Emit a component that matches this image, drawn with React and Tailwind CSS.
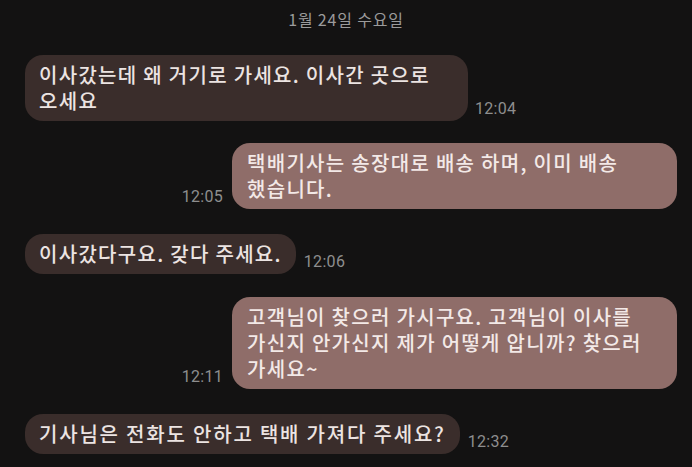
export default function App() {
  const bubbleFont = { fontFamily: '"Noto Sans CJK KR", "Noto Sans", sans-serif' };
  const timeCls = "mb-[3px] text-[16px] leading-[18px] text-[#8e8e8e] tracking-[0.3px]";
  const timeFont = { fontFamily: 'Roboto, sans-serif' };
  return (
    <div className="w-[692px] h-[467px] bg-[#131212] overflow-hidden flex flex-col" style={bubbleFont}>
      <div className="pt-[9px] text-center text-[16px] leading-[20px] tracking-[0.8px] text-[#9b9b9b]">1월 24일 수요일</div>

      {/* 1 */}
      <div className="mt-[26px] pl-[25px] flex items-end gap-[7px]">
        <div className="w-[443px] rounded-[18px] bg-[#3a2d2b] px-[14px] py-[7px] text-[20px] leading-[26px] tracking-[1.3px] font-medium text-[#ece4e2]">
          이사갔는데 왜 거기로 가세요. 이사간 곳으로<br />오세요
        </div>
        <div className={timeCls} style={timeFont}>12:04</div>
      </div>

      {/* 2 */}
      <div className="mt-[22px] pr-[15px] flex items-end justify-end gap-[9px]">
        <div className={timeCls} style={timeFont}>12:05</div>
        <div className="w-[445px] rounded-[18px] bg-[#8f6d69] px-[15px] py-[7px] text-[20px] leading-[26px] tracking-[1.3px] font-medium text-[#f3e9e7]">
          택배기사는 송장대로 배송 하며, 이미 배송<br />했습니다.
        </div>
      </div>

      {/* 3 */}
      <div className="mt-[25px] pl-[25px] flex items-end gap-[8px]">
        <div className="rounded-[18px] bg-[#3a2d2b] px-[14px] py-[7px] text-[20px] leading-[26px] tracking-[1.3px] font-medium text-[#ece4e2]">
          이사갔다구요. 갖다 주세요.
        </div>
        <div className={timeCls} style={timeFont}>12:06</div>
      </div>

      {/* 4 */}
      <div className="mt-[23px] pr-[15px] flex items-end justify-end gap-[9px]">
        <div className={timeCls} style={timeFont}>12:11</div>
        <div className="w-[445px] rounded-[18px] bg-[#8f6d69] px-[15px] py-[7px] text-[20px] leading-[26px] tracking-[1.3px] font-medium text-[#f3e9e7]">
          고객님이 찾으러 가시구요. 고객님이 이사를<br />가신지 안가신지 제가 어떻게 압니까? 찾으러<br />가세요~
        </div>
      </div>

      {/* 5 */}
      <div className="mt-[25px] pl-[25px] flex items-end gap-[8px]">
        <div className="rounded-[18px] bg-[#3a2d2b] px-[14px] py-[7px] text-[20px] leading-[26px] tracking-[1.8px] font-medium text-[#ece4e2]">
          기사님은 전화도 안하고 택배 가져다 주세요?
        </div>
        <div className={timeCls} style={timeFont}>12:32</div>
      </div>
    </div>
  );
}
